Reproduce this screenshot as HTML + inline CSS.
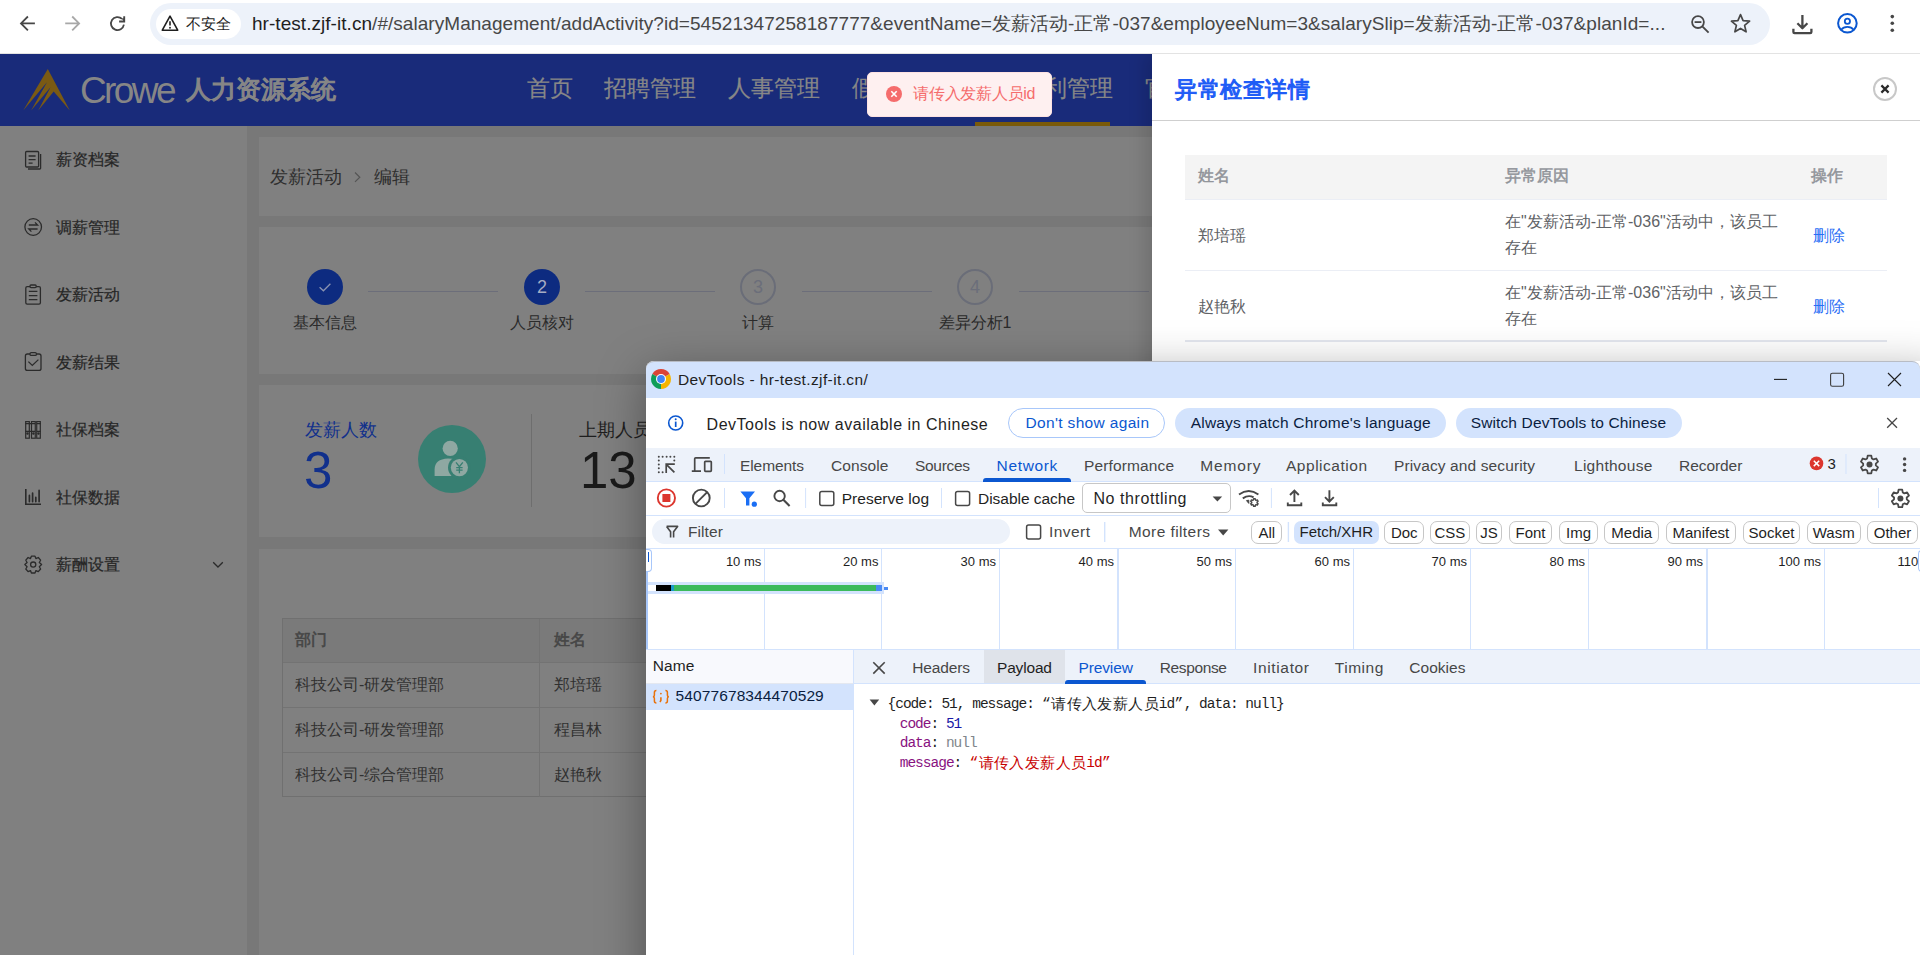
<!DOCTYPE html>
<html><head><meta charset="utf-8">
<style>
*{box-sizing:border-box;margin:0;padding:0}
html,body{width:1920px;height:955px;overflow:hidden;background:#fff;font-family:"Liberation Sans",sans-serif;position:relative}
.a{position:absolute}
.t{position:absolute;white-space:nowrap;line-height:1}
svg{position:absolute;overflow:visible}
.nav{top:77px;font-size:23px;color:#878787;-webkit-text-stroke:0.2px #878787}
.stp{top:315px;width:200px;text-align:center;font-size:16px;color:#2b2b2b}
.th{font-size:16px;color:#464646;-webkit-text-stroke:0.6px #464646}
.td{font-size:16px;color:#303030}
.dth{font-size:16px;color:#909399;-webkit-text-stroke:0.5px #909399}
.dtd{font-size:16px;color:#606266}
.dlink{font-size:16px;color:#2a6ef5}
.mono{font-family:"Liberation Mono",monospace;font-size:14.5px;letter-spacing:-1px;color:#1f1f1f;line-height:20px}
.cj{display:inline-block;width:15.4px;text-align:center;font-family:"Liberation Sans",sans-serif;font-size:14.6px;letter-spacing:0;vertical-align:top}
.q{display:inline-block;width:9.5px;text-align:center;letter-spacing:0;vertical-align:top}
.k{color:#881280}.n{color:#1a1aa6}.nl{color:#80868b}.s{color:#c80000}
.chip{top:521px;height:23px;border-radius:7px;font-size:15px;color:#1f1f1f;text-align:center;line-height:21px;white-space:nowrap}
.tl{top:555px;width:117px;text-align:right;font-size:13px;color:#1f1f1f}
.side{left:56px;font-size:16px;color:#262626;-webkit-text-stroke:0.2px #262626}
</style></head><body>

<!-- ============ APP HEADER ============ -->
<div class="a" style="left:0;top:54px;width:1920px;height:72px;background:#192b7a"></div>
<svg style="left:0;top:54px" width="80" height="72">
 <path transform="translate(0,-54)" d="M47.8 69L69.8 110.4L53.7 91.6L38.2 110.4L50.5 87.2L31.1 110.4L47 82.2L23.2 110.4Z" fill="#7a5a14"/>
</svg>
<div class="t" id="crowe" style="left:80px;top:72px;font-size:37px;color:#868686;letter-spacing:-2.6px">Crowe</div>
<div class="t" id="hrs" style="left:186px;top:77px;font-size:25px;color:#868686;-webkit-text-stroke:1.2px #868686">人力资源系统</div>
<div class="t nav" style="left:527px">首页</div>
<div class="t nav" style="left:604px">招聘管理</div>
<div class="t nav" style="left:728px">人事管理</div>
<div class="t nav" style="left:852px">假勤管理</div>
<div class="t nav" style="left:975px">薪资福利管理</div>
<div class="t nav" style="left:1145px">官网</div>
<div class="a" style="left:975px;top:122px;width:135px;height:4px;background:#7a5a0a"></div>

<!-- ============ SIDEBAR ============ -->
<div class="a" style="left:0;top:126px;width:247px;height:829px;background:#808080"></div>
<svg style="left:0;top:126px" width="247" height="460" fill="none" stroke="#2b2b2b" stroke-width="1.3">
 <g transform="translate(0,-126)">
 <!-- 薪资档案 -->
 <path d="M27.5 151.5H37.5Q38.6 151.5 38.6 152.6V166Q38.6 167 37.5 167H26.6Q25.6 167 25.6 166V152.6Q25.6 151.5 26.6 151.5Z"/>
 <path d="M40.6 154V168.2Q40.6 169 39.8 169H28"/>
 <path d="M28.6 156H35.6M28.6 159.6H35.6M28.6 163.2H32.6"/>
 <!-- 调薪管理 -->
 <circle cx="33.2" cy="227" r="8.3"/>
 <path d="M28.8 225H37.6L35 222.4M37.6 229H28.8L31.4 231.6"/>
 <!-- 发薪活动 -->
 <rect x="25.8" y="286.6" width="14.6" height="17.6" rx="1.4"/>
 <rect x="30" y="285" width="6.2" height="2.6" rx="1" fill="#808080"/>
 <path d="M28.8 291.4H37.4M28.8 295.6H37.4M28.8 299.6H37.4"/>
 <!-- 发薪结果 -->
 <rect x="25.4" y="354" width="15.6" height="16.4" rx="2"/>
 <rect x="30" y="352.6" width="6.4" height="2.8" rx="1.2" fill="#808080"/>
 <path d="M28.4 361.6L32.3 365.4L38.4 359.6"/>
 <!-- 社保档案 -->
 <rect x="25.7" y="421.6" width="3.6" height="16.6" stroke-width="1.2"/>
 <rect x="31.5" y="421.6" width="3.8" height="16.6" stroke-width="1.2"/>
 <rect x="36.7" y="421.6" width="3.6" height="16.6" stroke-width="1.2"/>
 <path d="M25.4 423.6H40.6M25.4 431.4H40.6" stroke-width="1.3"/>
 <path d="M35.9 421.6V438.2" stroke-width="1.6" stroke="#3a3a3a"/>
 <circle cx="27.5" cy="433.6" r="0.6" fill="#2b2b2b"/><circle cx="33.4" cy="433.6" r="0.6" fill="#2b2b2b"/><circle cx="38.5" cy="433.6" r="0.6" fill="#2b2b2b"/>
 <!-- 社保数据 -->
 <path d="M25.8 489V504.2H41" stroke-width="1.6"/>
 <path d="M29.4 495.4V501.6M32.6 493.2V501.6M35.8 497.4V501.6M39.1 490.4V501.6" stroke-width="1.7" stroke-linecap="round"/>
 <!-- 薪酬设置 -->
 <path d="M31.4 556.2H35L35.9 558.6L38.3 557.5L40.6 560.2L39.3 562.5L41.6 564.6L39.3 566.7L40.6 569L38.3 571.7L35.9 570.6L35 573H31.4L30.5 570.6L28.1 571.7L25.8 569L27.1 566.7L24.8 564.6L27.1 562.5L25.8 560.2L28.1 557.5L30.5 558.6Z" stroke-linejoin="round"/>
 <circle cx="33.2" cy="564.6" r="2.6"/>
 <path d="M213.2 562.2L218 567L222.8 562.2"/>
 </g>
</svg>
<div class="t side" style="top:152px">薪资档案</div>
<div class="t side" style="top:220px">调薪管理</div>
<div class="t side" style="top:287px">发薪活动</div>
<div class="t side" style="top:355px">发薪结果</div>
<div class="t side" style="top:422px">社保档案</div>
<div class="t side" style="top:490px">社保数据</div>
<div class="t side" style="top:557px">薪酬设置</div>

<!-- ============ CONTENT ============ -->
<div class="a" style="left:247px;top:126px;width:1673px;height:829px;background:#787878"></div>
<div class="a" style="left:259px;top:137px;width:1650px;height:79px;background:#808080"></div>
<div class="a" style="left:259px;top:227px;width:1650px;height:147px;background:#808080"></div>
<div class="a" style="left:259px;top:385px;width:1650px;height:152px;background:#808080"></div>
<div class="a" style="left:259px;top:549px;width:1650px;height:420px;background:#808080"></div>
<!-- breadcrumb -->
<div class="t" id="bc1" style="left:270px;top:168px;font-size:18px;color:#2e2e2e">发薪活动</div>
<svg style="left:350px;top:167px" width="16" height="20"><path d="M5 5.5L9.8 10.2L5 14.9" fill="none" stroke="#555" stroke-width="1.2"/></svg>
<div class="t" id="bc2" style="left:374px;top:168px;font-size:18px;color:#2e2e2e">编辑</div>
<!-- steps -->
<div class="a" style="left:368px;top:291px;width:130px;height:1px;background:#6c6e7a"></div>
<div class="a" style="left:585px;top:291px;width:130px;height:1px;background:#6c6e7a"></div>
<div class="a" style="left:802px;top:291px;width:130px;height:1px;background:#6c6e7a"></div>
<div class="a" style="left:1019px;top:291px;width:130px;height:1px;background:#6c6e7a"></div>
<div class="a" style="left:307px;top:269px;width:36px;height:36px;border-radius:50%;background:#0d2b80"></div>
<svg style="left:307px;top:269px" width="36" height="36"><path d="M12.6 18.2L16.4 21.8L23.4 14.8" fill="none" stroke="#8a93b0" stroke-width="1.3"/></svg>
<div class="a" style="left:524px;top:269px;width:36px;height:36px;border-radius:50%;background:#0d2b80"></div>
<div class="t" style="left:524px;top:278px;width:36px;text-align:center;font-size:18px;color:#a5acc4">2</div>
<div class="a" style="left:740px;top:269px;width:36px;height:36px;border-radius:50%;border:2px solid #6a6d78"></div>
<div class="t" style="left:740px;top:278px;width:36px;text-align:center;font-size:18px;color:#6b6e7a">3</div>
<div class="a" style="left:957px;top:269px;width:36px;height:36px;border-radius:50%;border:2px solid #6a6d78"></div>
<div class="t" style="left:957px;top:278px;width:36px;text-align:center;font-size:18px;color:#6b6e7a">4</div>
<div class="t stp" style="left:225px">基本信息</div>
<div class="t stp" style="left:442px">人员核对</div>
<div class="t stp" style="left:658px">计算</div>
<div class="t stp" style="left:875px">差异分析1</div>
<!-- stats -->
<div class="t" id="st1" style="left:305px;top:421px;font-size:18px;color:#11308c">发薪人数</div>
<div class="t" id="st2" style="left:304px;top:445px;font-size:51px;color:#11308c">3</div>
<div class="a" style="left:418px;top:425px;width:68px;height:68px;border-radius:50%;background:#377f72"></div>
<svg style="left:418px;top:425px" width="68" height="68">
 <circle cx="32.2" cy="23.4" r="7.6" fill="#8fa8a2"/>
 <path d="M16.6 51V44.6Q16.6 34.2 30 33.6Q38 33.6 42 36.4L42 51Z" fill="#8fa8a2"/>
 <circle cx="41.4" cy="42.6" r="11.4" fill="#377f72"/>
 <circle cx="41.4" cy="42.6" r="8.6" fill="#8fa8a2"/>
 <path d="M38 37.4L41.4 41.6L44.8 37.4M41.4 41.6V48.2M38.2 42.6H44.6M38.2 45.2H44.6" fill="none" stroke="#377f72" stroke-width="1.3"/>
</svg>
<div class="a" style="left:531px;top:414px;width:1px;height:93px;background:#6e6e6e"></div>
<div class="t" id="st3" style="left:579px;top:421px;font-size:18px;color:#1e1e1e">上期人员数</div>
<div class="t" id="st4" style="left:580px;top:445px;font-size:51px;color:#1a1a1a">13</div>
<!-- table -->
<div class="a" style="left:282px;top:618px;width:900px;height:179px;border:1px solid #707070;border-right:none"></div>
<div class="a" style="left:283px;top:619px;width:900px;height:44px;background:#7a7a7a"></div>
<div class="a" style="left:283px;top:662px;width:900px;height:1px;background:#737373"></div>
<div class="a" style="left:283px;top:707px;width:900px;height:1px;background:#737373"></div>
<div class="a" style="left:283px;top:752px;width:900px;height:1px;background:#737373"></div>
<div class="a" style="left:539px;top:619px;width:1px;height:178px;background:#737373"></div>
<div class="t th" style="left:295px;top:632px">部门</div>
<div class="t th" style="left:554px;top:632px">姓名</div>
<div class="t td" style="left:295px;top:677px">科技公司-研发管理部</div>
<div class="t td" style="left:554px;top:677px">郑培瑶</div>
<div class="t td" style="left:295px;top:722px">科技公司-研发管理部</div>
<div class="t td" style="left:554px;top:722px">程昌林</div>
<div class="t td" style="left:295px;top:767px">科技公司-综合管理部</div>
<div class="t td" style="left:554px;top:767px">赵艳秋</div>

<!-- ============ DRAWER ============ -->
<div class="a" style="left:1152px;top:54px;width:768px;height:901px;background:#fff;box-shadow:-8px 0 16px rgba(0,0,0,.12)"></div>
<div class="t" id="dtitle" style="left:1175px;top:79px;letter-spacing:0.5px;font-size:22.4px;color:#1f5cf6;-webkit-text-stroke:1.1px #1f5cf6">异常检查详情</div>
<div class="a" style="left:1873px;top:77px;width:24px;height:24px;border-radius:50%;border:2px solid #c8c8c8"></div>
<svg style="left:1873px;top:77px" width="24" height="24"><path d="M8.4 8.4L15.6 15.6M15.6 8.4L8.4 15.6" stroke="#2a2a2a" stroke-width="2.2"/></svg>
<div class="a" style="left:1152px;top:120px;width:768px;height:1px;background:#cfcfcf"></div>
<div class="a" style="left:1185px;top:155px;width:702px;height:44px;background:#f4f4f4"></div>
<div class="a" style="left:1185px;top:199px;width:702px;height:1px;background:#ebeef5"></div>
<div class="a" style="left:1185px;top:270px;width:702px;height:1px;background:#ebeef5"></div>
<div class="a" style="left:1185px;top:340px;width:702px;height:2px;background:#e4e7ef"></div>
<div class="t dth" style="left:1198px;top:168px">姓名</div>
<div class="t dth" style="left:1505px;top:168px">异常原因</div>
<div class="t dth" style="left:1811px;top:168px">操作</div>
<div class="t dtd" style="left:1198px;top:228px">郑培瑶</div>
<div class="t dtd" style="left:1505px;top:209px;line-height:26px">在"发薪活动-正常-036"活动中，该员工<br>存在</div>
<div class="t dlink" style="left:1813px;top:228px">删除</div>
<div class="t dtd" style="left:1198px;top:299px">赵艳秋</div>
<div class="t dtd" style="left:1505px;top:280px;line-height:26px">在"发薪活动-正常-036"活动中，该员工<br>存在</div>
<div class="t dlink" style="left:1813px;top:299px">删除</div>

<!-- ============ DEVTOOLS ============ -->
<div class="a" style="left:646px;top:361px;width:1300px;height:700px;background:#fff;border-radius:8px 8px 0 0;box-shadow:0 12px 48px rgba(0,0,0,.37)"></div>
<div class="a" style="left:646px;top:361px;width:1274px;height:37px;background:#d3e3fd;border-radius:8px 8px 0 0;border-top:1px solid #b8bcc4"></div>
<svg style="left:651px;top:369px" width="20" height="20" viewBox="0 0 20 20">
 <path d="M10 10L1.34 5A10 10 0 0 1 18.66 5Z" fill="#db4437"/>
 <path d="M10 10L18.66 5A10 10 0 0 1 10 20Z" fill="#f4b400"/>
 <path d="M10 10L10 20A10 10 0 0 1 1.34 5Z" fill="#0f9d58"/>
 <circle cx="10" cy="10" r="5" fill="#fff"/><circle cx="10" cy="10" r="3.9" fill="#4285f4"/>
</svg>
<div class="t" style="left:678.0px;top:372.4px;font-size:15.5px;letter-spacing:0.38px;color:#1f1f1f;">DevTools - hr-test.zjf-it.cn/</div>
<svg style="left:1760px;top:361px" width="160" height="37" fill="none">
 <path d="M14 18.4H27" stroke="#1f1f1f" stroke-width="1.1"/>
 <rect x="70.6" y="12.3" width="13" height="13" rx="1.8" stroke="#3c3c3c" stroke-width="1.1"/>
 <path d="M128 12L141 25M141 12L128 25" stroke="#1f1f1f" stroke-width="1.1"/>
</svg>
<svg style="left:666px;top:413px" width="20" height="20" fill="none">
 <circle cx="9.7" cy="10" r="7" stroke="#0b57d0" stroke-width="1.6"/>
 <path d="M9.7 8.6V14" stroke="#0b57d0" stroke-width="1.7"/><circle cx="9.7" cy="6.3" r="1" fill="#0b57d0"/>
</svg>
<div class="t" style="left:706.6px;top:417.0px;font-size:16px;letter-spacing:0.51px;color:#1f1f1f;">DevTools is now available in Chinese</div>
<div class="a" style="left:1008px;top:408px;width:157px;height:30px;border-radius:15px;border:1px solid #a8c7fa"></div>
<div class="t" style="left:1025.5px;top:415.4px;font-size:15.5px;letter-spacing:0.34px;color:#0b57d0;">Don't show again</div>
<div class="a" style="left:1175px;top:408px;width:271px;height:30px;border-radius:15px;background:#d3e3fd"></div>
<div class="t" style="left:1190.7px;top:415.4px;font-size:15.5px;letter-spacing:0.21px;color:#0a1d3f;">Always match Chrome's language</div>
<div class="a" style="left:1456px;top:408px;width:226px;height:30px;border-radius:15px;background:#d3e3fd"></div>
<div class="t" style="left:1470.7px;top:415.4px;font-size:15.5px;letter-spacing:0.13px;color:#0a1d3f;">Switch DevTools to Chinese</div>
<svg style="left:1880px;top:413px" width="24" height="20" fill="none"><path d="M7.2 5L17 14.8M17 5L7.2 14.8" stroke="#474747" stroke-width="1.3"/></svg>
<div class="a" style="left:646px;top:448px;width:1274px;height:34px;background:#edf2fa;border-bottom:1px solid #d3e3fd"></div>
<svg style="left:646px;top:448px" width="1274" height="34" fill="none" stroke="#474747">
<circle cx="12.8" cy="8.75" r="1" fill="#474747" stroke="none"/><circle cx="16.6" cy="8.75" r="1" fill="#474747" stroke="none"/><circle cx="20.6" cy="8.75" r="1" fill="#474747" stroke="none"/><circle cx="24.4" cy="8.75" r="1" fill="#474747" stroke="none"/><circle cx="28.3" cy="8.75" r="1" fill="#474747" stroke="none"/><circle cx="12.8" cy="12.5" r="1" fill="#474747" stroke="none"/><circle cx="12.8" cy="16.5" r="1" fill="#474747" stroke="none"/><circle cx="12.8" cy="20.3" r="1" fill="#474747" stroke="none"/><circle cx="12.8" cy="24.3" r="1" fill="#474747" stroke="none"/><circle cx="16.6" cy="24.3" r="1" fill="#474747" stroke="none"/><circle cx="28.3" cy="12.5" r="1" fill="#474747" stroke="none"/>
 <path d="M20.2 15.4V25M19.4 16.2H28.8M20.8 16.8L28.4 24.4" stroke-width="1.7"/>
 <path d="M63.8 9.8H49.7Q48.7 9.8 48.7 10.8V23.2M45.8 23.2H55" stroke-width="1.7"/>
 <rect x="58.7" y="13.3" width="6.6" height="10" rx="0.8" stroke-width="1.7"/>
 <path d="M78.5 6V26" stroke="#d3e3fd" stroke-width="1"/>
 <path d="M1200 6V26" stroke="#d3e3fd" stroke-width="1"/>
 <path d="M1221.12 10.56 L1221.70 7.68 L1225.30 7.68 L1225.88 10.56 L1227.45 11.47 L1230.23 10.53 L1232.04 13.65 L1229.84 15.60 L1229.84 17.40 L1232.04 19.35 L1230.23 22.47 L1227.45 21.53 L1225.88 22.44 L1225.30 25.32 L1221.70 25.32 L1221.12 22.44 L1219.55 21.53 L1216.77 22.47 L1214.96 19.35 L1217.16 17.40 L1217.16 15.60 L1214.96 13.65 L1216.77 10.53 L1219.55 11.47Z" stroke-width="1.8" stroke-linejoin="round"/>
 <circle cx="1223.5" cy="16.5" r="3" fill="#474747" stroke="none"/>
 <circle cx="1258.6" cy="10.9" r="1.7" fill="#474747" stroke="none"/><circle cx="1258.6" cy="16.5" r="1.7" fill="#474747" stroke="none"/><circle cx="1258.6" cy="22.4" r="1.7" fill="#474747" stroke="none"/>
</svg>
<div class="t" style="left:740.0px;top:458.4px;font-size:15.5px;letter-spacing:-0.09px;color:#474747;">Elements</div>
<div class="t" style="left:831.0px;top:458.4px;font-size:15.5px;letter-spacing:0.07px;color:#474747;">Console</div>
<div class="t" style="left:915.0px;top:458.4px;font-size:15.5px;letter-spacing:-0.31px;color:#474747;">Sources</div>
<div class="t" style="left:996.6px;top:458.4px;font-size:15.5px;letter-spacing:0.65px;color:#0b57d0;">Network</div>
<div class="t" style="left:1084.0px;top:458.4px;font-size:15.5px;letter-spacing:0.13px;color:#474747;">Performance</div>
<div class="t" style="left:1200.3px;top:458.4px;font-size:15.5px;letter-spacing:0.83px;color:#474747;">Memory</div>
<div class="t" style="left:1286.0px;top:458.4px;font-size:15.5px;letter-spacing:0.52px;color:#474747;">Application</div>
<div class="t" style="left:1394.0px;top:458.4px;font-size:15.5px;letter-spacing:0.12px;color:#474747;">Privacy and security</div>
<div class="t" style="left:1574.0px;top:458.4px;font-size:15.5px;letter-spacing:0.27px;color:#474747;">Lighthouse</div>
<div class="t" style="left:1679.0px;top:458.4px;font-size:15.5px;letter-spacing:-0.06px;color:#474747;">Recorder</div>
<div class="a" style="left:983px;top:478px;width:88px;height:4px;border-radius:3px 3px 0 0;background:#0b57d0"></div>
<svg style="left:1808px;top:455px" width="18" height="18"><circle cx="8.5" cy="8.4" r="6.8" fill="#dc362e"/><path d="M5.8 5.7L11.2 11.1M11.2 5.7L5.8 11.1" stroke="#fff" stroke-width="1.5"/></svg>
<div class="t" style="left:1827.4px;top:456.0px;font-size:15px;letter-spacing:0.00px;color:#1f1f1f;">3</div>
<div class="a" style="left:646px;top:482px;width:1274px;height:34px;background:#fff;border-bottom:1px solid #d3e3fd"></div>
<svg style="left:646px;top:482px" width="1274" height="33" fill="none" stroke="#474747">
 <circle cx="20.4" cy="16" r="8.6" stroke="#dc362e" stroke-width="1.9"/>
 <rect x="16.4" y="12" width="8" height="8" fill="#dc362e" stroke="none"/>
 <circle cx="55.3" cy="16" r="8.4" stroke-width="1.9"/>
 <path d="M49.4 21.9L61.2 10.1" stroke-width="1.9"/>
 <path d="M78.5 6V26" stroke="#d3e3fd" stroke-width="1"/>
 <path d="M94.4 9.4H109L103.4 16.2V23.6H100V16.2Z" fill="#1a6ef4" stroke="none"/>
 <circle cx="108.3" cy="22.2" r="2.6" fill="#1a6ef4" stroke="none"/>
 <circle cx="133.6" cy="14" r="5.2" stroke-width="1.9"/>
 <path d="M137.4 17.8L143.6 24" stroke-width="2.1"/>
 <path d="M159.6 6V26" stroke="#d3e3fd" stroke-width="1"/>
 <rect x="173.8" y="9.6" width="14" height="14" rx="2" stroke-width="1.5"/>
 <path d="M295.5 6V26" stroke="#d3e3fd" stroke-width="1"/>
 <rect x="309.6" y="9.6" width="14" height="14" rx="2" stroke-width="1.5"/>
 <path d="M593 12.5Q602.7 5.5 612.4 12.5" stroke-width="1.9"/>
 <path d="M596.8 16.4Q602.5 12.4 607.6 15.4" stroke-width="1.9"/>
 <path d="M600.5 18.6L602.8 21.4L602.8 18.2Z" fill="#474747" stroke-width="1"/>
 <path d="M607.39 17.99 L607.62 16.68 L609.18 16.68 L609.41 17.99 L610.07 18.38 L611.32 17.91 L612.10 19.27 L611.07 20.12 L611.07 20.88 L612.10 21.73 L611.32 23.09 L610.07 22.62 L609.41 23.01 L609.18 24.32 L607.62 24.32 L607.39 23.01 L606.73 22.62 L605.48 23.09 L604.70 21.73 L605.73 20.88 L605.73 20.12 L604.70 19.27 L605.48 17.91 L606.73 18.38Z" stroke-width="1.4" stroke-linejoin="round"/>
 <path d="M625.4 6V26" stroke="#d3e3fd" stroke-width="1"/>
 <path d="M648.4 19.9V8.3M644 13L648.4 8.6L652.8 13M641.8 20.5V23.3H655.3V20.5" stroke-width="1.9"/>
 <path d="M683.4 8.3V19.9M679 15.2L683.4 19.6L687.8 15.2M676.8 20.5V23.3H690.3V20.5" stroke-width="1.9"/>
 <path d="M1232.5 6V26" stroke="#d3e3fd" stroke-width="1"/>
 <path d="M1252.02 10.46 L1252.60 7.58 L1256.20 7.58 L1256.78 10.46 L1258.35 11.37 L1261.13 10.43 L1262.94 13.55 L1260.74 15.50 L1260.74 17.30 L1262.94 19.25 L1261.13 22.37 L1258.35 21.43 L1256.78 22.34 L1256.20 25.22 L1252.60 25.22 L1252.02 22.34 L1250.45 21.43 L1247.67 22.37 L1245.86 19.25 L1248.06 17.30 L1248.06 15.50 L1245.86 13.55 L1247.67 10.43 L1250.45 11.37Z" stroke-width="1.8" stroke-linejoin="round"/>
 <circle cx="1254.4" cy="16.4" r="3" fill="#474747" stroke="none"/>
</svg>
<div class="t" style="left:841.7px;top:491.0px;font-size:15.5px;letter-spacing:0.03px;color:#1f1f1f;">Preserve log</div>
<div class="t" style="left:978.0px;top:491.0px;font-size:15.5px;letter-spacing:-0.03px;color:#1f1f1f;">Disable cache</div>
<div class="a" style="left:1082px;top:483px;width:149px;height:30px;border-radius:5px;border:1px solid #c7c7c7"></div>
<div class="t" style="left:1093.5px;top:490.6px;font-size:16px;letter-spacing:0.56px;color:#1f1f1f;">No throttling</div>
<svg style="left:1208px;top:492px" width="20" height="14"><path d="M4.6 4.6H14.2L9.4 9.6Z" fill="#474747"/></svg>
<div class="a" style="left:646px;top:516px;width:1274px;height:33px;background:#fff;border-bottom:1px solid #d3e3fd"></div>
<div class="a" style="left:652px;top:519px;width:358px;height:25px;border-radius:12.5px;background:#edf2fa"></div>
<svg style="left:646px;top:516px" width="1274" height="33" fill="none" stroke="#474747">
 <path d="M20.6 10.4H31.6L27.6 15.7V21.6M24.6 21.6V15.7L20.6 10.4" stroke-width="1.6" stroke-linejoin="round"/>
 <rect x="380.6" y="9" width="14" height="14" rx="2" stroke-width="1.5"/>
 <path d="M458.7 6V26" stroke="#d3e3fd" stroke-width="1.4"/>
 <path d="M572 13.4H582.4L577.2 19.6Z" fill="#474747" stroke="none"/>
 <path d="M642.4 6V26" stroke="#d3e3fd" stroke-width="1.4"/>
</svg>
<div class="t" style="left:688.0px;top:523.9px;font-size:15.5px;letter-spacing:0.07px;color:#474747;">Filter</div>
<div class="t" style="left:1049.0px;top:523.9px;font-size:15.5px;letter-spacing:0.45px;color:#474747;">Invert</div>
<div class="t" style="left:1128.7px;top:523.9px;font-size:15.5px;letter-spacing:0.42px;color:#474747;">More filters</div>
<div class="a chip" style="left:1251.4px;width:30.9px;border:1px solid #c7c7c7;">All</div>
<div class="a chip" style="left:1294.0px;width:84.6px;background:#d3e3fd;">Fetch/XHR</div>
<div class="a chip" style="left:1384.2px;width:40.1px;border:1px solid #c7c7c7;">Doc</div>
<div class="a chip" style="left:1430.0px;width:39.8px;border:1px solid #c7c7c7;">CSS</div>
<div class="a chip" style="left:1475.5px;width:26.8px;border:1px solid #c7c7c7;">JS</div>
<div class="a chip" style="left:1508.7px;width:43.6px;border:1px solid #c7c7c7;">Font</div>
<div class="a chip" style="left:1558.7px;width:39.6px;border:1px solid #c7c7c7;">Img</div>
<div class="a chip" style="left:1604.3px;width:55.0px;border:1px solid #c7c7c7;">Media</div>
<div class="a chip" style="left:1665.7px;width:70.3px;border:1px solid #c7c7c7;">Manifest</div>
<div class="a chip" style="left:1742.7px;width:57.6px;border:1px solid #c7c7c7;">Socket</div>
<div class="a chip" style="left:1806.7px;width:54.0px;border:1px solid #c7c7c7;">Wasm</div>
<div class="a chip" style="left:1866.7px;width:51.6px;border:1px solid #c7c7c7;">Other</div>
<div class="a" style="left:646px;top:549px;width:1274px;height:101px;background:#fff;border-bottom:1px solid #d3e3fd"></div>
<div class="a" style="left:764.3px;top:549px;width:1px;height:100px;background:#d3e3fd"></div>
<div class="t tl" style="left:644.3px;">10 ms</div>
<div class="a" style="left:881.4px;top:549px;width:1px;height:100px;background:#d3e3fd"></div>
<div class="t tl" style="left:761.4px;">20 ms</div>
<div class="a" style="left:999.0px;top:549px;width:1px;height:100px;background:#d3e3fd"></div>
<div class="t tl" style="left:879.0px;">30 ms</div>
<div class="a" style="left:1117.0px;top:549px;width:2px;height:100px;background:#d3e3fd"></div>
<div class="t tl" style="left:997.0px;">40 ms</div>
<div class="a" style="left:1235.0px;top:549px;width:1px;height:100px;background:#d3e3fd"></div>
<div class="t tl" style="left:1115.0px;">50 ms</div>
<div class="a" style="left:1353.0px;top:549px;width:1px;height:100px;background:#d3e3fd"></div>
<div class="t tl" style="left:1233.0px;">60 ms</div>
<div class="a" style="left:1470.0px;top:549px;width:1px;height:100px;background:#d3e3fd"></div>
<div class="t tl" style="left:1350.0px;">70 ms</div>
<div class="a" style="left:1588.0px;top:549px;width:1px;height:100px;background:#d3e3fd"></div>
<div class="t tl" style="left:1468.0px;">80 ms</div>
<div class="a" style="left:1706.0px;top:549px;width:2px;height:100px;background:#d3e3fd"></div>
<div class="t tl" style="left:1586.0px;">90 ms</div>
<div class="a" style="left:1824.0px;top:549px;width:1px;height:100px;background:#d3e3fd"></div>
<div class="t tl" style="left:1704.0px;">100 ms</div>
<div class="t tl" style="left:1897.5px;text-align:left;width:80px">110</div>
<div class="a" style="left:646px;top:549px;width:2px;height:100px;background:#a8c7fa"></div>
<div class="a" style="left:646px;top:549px;width:6px;height:23px;border:1px solid #a8c7fa;border-left:none;border-radius:0 4px 4px 0;background:#fff"></div>
<div class="a" style="left:647.5px;top:552px;width:1px;height:10px;background:#0b57d0"></div>
<div class="a" style="left:1918px;top:550px;width:4px;height:22px;border:1px solid #a8c7fa;border-right:none;border-radius:4px 0 0 4px;background:#fff"></div>
<div class="a" style="left:648px;top:582px;width:236.4px;height:12.4px;background:#d3e3fd"></div>
<div class="a" style="left:648px;top:584.6px;width:8px;height:6.2px;background:#fff"></div>
<div class="a" style="left:656px;top:584.6px;width:15.4px;height:6.2px;background:#000"></div>
<div class="a" style="left:671.4px;top:584.6px;width:2.6px;height:6.2px;background:#1a9bc8"></div>
<div class="a" style="left:674px;top:584.6px;width:202px;height:6.2px;background:#3cba5c"></div>
<div class="a" style="left:876px;top:584.6px;width:6px;height:6.2px;background:#4a8af4"></div>
<div class="a" style="left:884.4px;top:587px;width:3.4px;height:3px;background:#4a8af4"></div>
<div class="a" style="left:646px;top:650px;width:207px;height:34px;background:#f8f9fd;border-bottom:1px solid #e4e8f0"></div>
<div class="t" style="left:652.8px;top:657.9px;font-size:15.5px;letter-spacing:0.10px;color:#1f1f1f;">Name</div>
<div class="a" style="left:646px;top:684px;width:207px;height:26px;background:#d3e3fd"></div>
<svg style="left:650px;top:686px" width="22" height="22" fill="none" stroke="#e8710a" stroke-width="1.5">
 <path d="M6.4 4.6Q4.4 4.6 4.4 6.6V9.2Q4.4 10.6 3 10.8Q4.4 11 4.4 12.4V15Q4.4 17 6.4 17"/>
 <path d="M15.4 4.6Q17.4 4.6 17.4 6.6V9.2Q17.4 10.6 18.8 10.8Q17.4 11 17.4 12.4V15Q17.4 17 15.4 17"/>
 <circle cx="10.9" cy="7.6" r="0.9" fill="#e8710a" stroke="none"/>
 <path d="M10.9 11.2V14.4L10 16" stroke-width="1.6"/>
</svg>
<div class="t" style="left:675.6px;top:687.9px;font-size:15.5px;letter-spacing:0.10px;color:#0a1d3f;">54077678344470529</div>
<div class="a" style="left:853px;top:650px;width:1px;height:305px;background:#d3e3fd"></div>
<div class="a" style="left:854px;top:650px;width:1066px;height:34px;background:#edf2fa;border-bottom:1px solid #d3e3fd"></div>
<div class="a" style="left:984px;top:650px;width:81px;height:33px;background:#dfe3ea"></div>
<svg style="left:866px;top:658px" width="24" height="20"><path d="M7.3 4.2L18.7 15.6M18.7 4.2L7.3 15.6" stroke="#474747" stroke-width="1.6"/></svg>
<div class="t" style="left:912.3px;top:659.8px;font-size:15.5px;letter-spacing:-0.15px;color:#474747;">Headers</div>
<div class="t" style="left:997.0px;top:659.8px;font-size:15.5px;letter-spacing:-0.17px;color:#1f1f1f;">Payload</div>
<div class="t" style="left:1078.4px;top:659.8px;font-size:15.5px;letter-spacing:-0.10px;color:#0b57d0;">Preview</div>
<div class="t" style="left:1159.7px;top:659.8px;font-size:15.5px;letter-spacing:-0.36px;color:#474747;">Response</div>
<div class="t" style="left:1253.0px;top:659.8px;font-size:15.5px;letter-spacing:0.65px;color:#474747;">Initiator</div>
<div class="t" style="left:1334.8px;top:659.8px;font-size:15.5px;letter-spacing:0.51px;color:#474747;">Timing</div>
<div class="t" style="left:1409.3px;top:659.8px;font-size:15.5px;letter-spacing:0.02px;color:#474747;">Cookies</div>
<div class="a" style="left:1065px;top:680px;width:81.4px;height:3.6px;border-radius:3px 3px 0 0;background:#0b57d0"></div>
<svg style="left:866px;top:695px" width="16" height="14"><path d="M3.6 4.6H13.2L8.4 10.4Z" fill="#474747"/></svg>
<div class="t mono" style="left:887.5px;top:694.3px">{code: 51, message: <span class="q">“</span><span class="cj">请</span><span class="cj">传</span><span class="cj">入</span><span class="cj">发</span><span class="cj">薪</span><span class="cj">人</span><span class="cj">员</span>id<span class="q">”</span>, data: null}</div>
<div class="t mono" style="left:899.7px;top:713.6px"><span class="k">code</span>: <span class="n">51</span></div>
<div class="t mono" style="left:899.7px;top:733.2px"><span class="k">data</span>: <span class="nl">null</span></div>
<div class="t mono" style="left:899.7px;top:752.8px"><span class="k">message</span>: <span class="s"><span class="q">“</span><span class="cj">请</span><span class="cj">传</span><span class="cj">入</span><span class="cj">发</span><span class="cj">薪</span><span class="cj">人</span><span class="cj">员</span>id<span class="q">”</span></span></div>

<!-- ============ TOAST ============ -->
<div class="a" style="left:867px;top:72px;width:185px;height:45px;border-radius:5px;background:#fef0f0;border:1px solid #fde2e2"></div>
<svg style="left:886px;top:86px" width="16" height="16"><circle cx="8" cy="8" r="8" fill="#f56c6c"/><path d="M5.3 5.3L10.7 10.7M10.7 5.3L5.3 10.7" stroke="#fff" stroke-width="1.6"/></svg>
<div class="t" id="toast" style="left:913px;top:86px;font-size:16px;letter-spacing:-0.25px;color:#f56c6c">请传入发薪人员id</div>

<!-- ============ BROWSER TOOLBAR ============ -->
<div class="a" style="left:0;top:0;width:1920px;height:54px;background:#fff;border-bottom:1px solid #e3e3e3"></div>
<div class="a" style="left:150px;top:3px;width:1620px;height:42px;border-radius:21px;background:#edf2fa"></div>
<div class="a" style="left:156px;top:9px;width:85px;height:30px;border-radius:15px;background:#fff"></div>
<svg style="left:0;top:0" width="140" height="54">
 <path d="M34.9 23.4H21.2M27.9 16.5L21 23.4L27.9 30.3" fill="none" stroke="#474747" stroke-width="1.8"/>
 <path d="M65.2 23.4H78.9M72.2 16.5L79.1 23.4L72.2 30.3" fill="none" stroke="#a8a8a8" stroke-width="1.8"/>
 <path d="M122 18.9A6.5 6.5 0 1 0 123.9 24.6" fill="none" stroke="#474747" stroke-width="1.8"/>
 <path d="M124.2 16.2V21.5H119.1" fill="none" stroke="#474747" stroke-width="1.9"/>
 <path d="M124.2 21.5L121.4 18.6L124.2 18.2Z" fill="#474747"/>
</svg>
<svg style="left:160px;top:14px" width="22" height="20">
 <path d="M10 2.2L2.3 16.2H17.7Z" fill="none" stroke="#1f1f1f" stroke-width="1.6" stroke-linejoin="round"/>
 <path d="M10 7.2V11.6" stroke="#1f1f1f" stroke-width="1.6"/><circle cx="10" cy="13.8" r="0.95" fill="#1f1f1f"/>
</svg>
<div class="t" id="insecure" style="left:186px;top:16px;font-size:15px;color:#1f1f1f">不安全</div>
<div class="t" id="url" style="left:252px;top:14px;font-size:19px;letter-spacing:0.045px;color:#1f1f1f">hr-test.zjf-it.cn<span style="color:#474747">/#/salaryManagement/addActivity?id=54521347258187777&amp;eventName=发薪活动-正常-037&amp;employeeNum=3&amp;salarySlip=发薪活动-正常-037&amp;planId=...</span></div>
<svg style="left:1680px;top:0" width="240" height="54">
 <circle cx="18" cy="22.1" r="5.9" fill="none" stroke="#474747" stroke-width="1.8"/>
 <path d="M14.6 22.1H21.4" stroke="#474747" stroke-width="1.8"/>
 <path d="M22.3 26.4L28.6 32.6" stroke="#474747" stroke-width="1.9"/>
 <path d="M60.5 14.6L63.1 20.7L69.6 21.2L64.6 25.4L66.1 31.8L60.5 28.4L54.9 31.8L56.4 25.4L51.4 21.2L57.9 20.7Z" fill="none" stroke="#474747" stroke-width="1.7" stroke-linejoin="round"/>
 <path d="M122.4 15V28M117.4 23.2L122.4 28.2L127.4 23.2M113.4 28.8V32Q113.4 33.2 114.6 33.2H130.2Q131.4 33.2 131.4 32V28.8" fill="none" stroke="#474747" stroke-width="2.3" stroke-linejoin="round"/>
 <circle cx="167.4" cy="23.3" r="9.3" fill="none" stroke="#0b57d0" stroke-width="2"/>
 <circle cx="167.4" cy="21.2" r="2.6" fill="none" stroke="#0b57d0" stroke-width="1.8"/>
 <path d="M161.2 29.8C162.6 27.9 164.8 26.9 167.4 26.9S172.2 27.9 173.6 29.8" fill="none" stroke="#0b57d0" stroke-width="1.8"/>
 <circle cx="212.3" cy="16.6" r="1.8" fill="#474747"/><circle cx="212.3" cy="23.3" r="1.8" fill="#474747"/><circle cx="212.3" cy="30.2" r="1.8" fill="#474747"/>
</svg>

</body></html>
